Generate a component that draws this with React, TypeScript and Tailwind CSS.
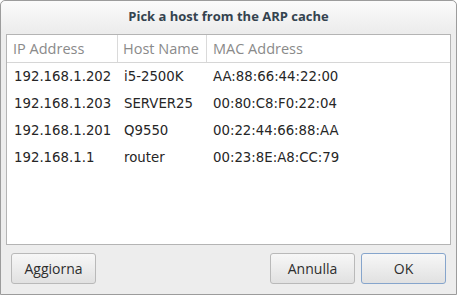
const hosts = [
  { ip: '192.168.1.202', name: 'i5-2500K', mac: 'AA:88:66:44:22:00' },
  { ip: '192.168.1.203', name: 'SERVER25', mac: '00:80:C8:F0:22:04' },
  { ip: '192.168.1.201', name: 'Q9550', mac: '00:22:44:66:88:AA' },
  { ip: '192.168.1.1', name: 'router', mac: '00:23:8E:A8:CC:79' },
];

const ui = { fontFamily: '"Open Sans", "Noto Sans", sans-serif' };
const mono = { fontFamily: '"DejaVu Sans", sans-serif' };

export default function App() {
  return (
    <div className="h-[296px] w-[458px] bg-white">
      <div className="flex h-[295px] w-[457px] flex-col rounded-t-[5px] border border-[#9c9c9c] bg-[#ededed]" style={ui}>
        <div className="flex h-[32px] shrink-0 items-center justify-center rounded-t-[5px] bg-gradient-to-b from-[#fbfbfb] to-[#ececec]">
          <span className="text-[13px] font-bold text-[#34434f]">Pick a host from the ARP cache</span>
        </div>

        <div className="mx-[5px] mt-[1px] h-[211px] border border-[#b4b4b4] bg-white">
          <div className="flex h-[28px] border-b border-[#d6d6d6] text-[14.5px] text-[#8a8a8a]">
            <div className="flex w-[111px] items-center border-r border-[#dadada] pl-[6px]">IP Address</div>
            <div className="flex w-[89px] items-center border-r border-[#dadada] pl-[5px]">Host Name</div>
            <div className="flex flex-1 items-center pl-[6px]">MAC Address</div>
          </div>
          {hosts.map((h) => (
            <div key={h.ip} className="flex h-[27px] items-center pt-[1px] text-[13.3px] text-[#262626]" style={mono}>
              <div className="w-[111px] pl-[7px]">{h.ip}</div>
              <div className="w-[89px] pl-[6px]">{h.name}</div>
              <div className="flex-1 pl-[6px]">{h.mac}</div>
            </div>
          ))}
        </div>

        <div className="mt-[8px] flex px-[10px]">
          <Button label="Aggiorna" />
          <div className="flex-1" />
          <Button label="Annulla" />
          <div className="w-[6px]" />
          <Button label="OK" primary />
        </div>
      </div>
    </div>
  );
}

function Button({ label, primary }: { label: string; primary?: boolean }) {
  return (
    <button
      className={
        'flex h-[31px] w-[85px] items-center justify-center rounded-[3px] border bg-gradient-to-b from-[#f7f7f7] to-[#e1e1e1] text-[14px] text-[#2e2e2e] ' +
        (primary ? 'border-[#86a5cc]' : 'border-[#b9b9b9]')
      }
    >
      {label}
    </button>
  );
}
